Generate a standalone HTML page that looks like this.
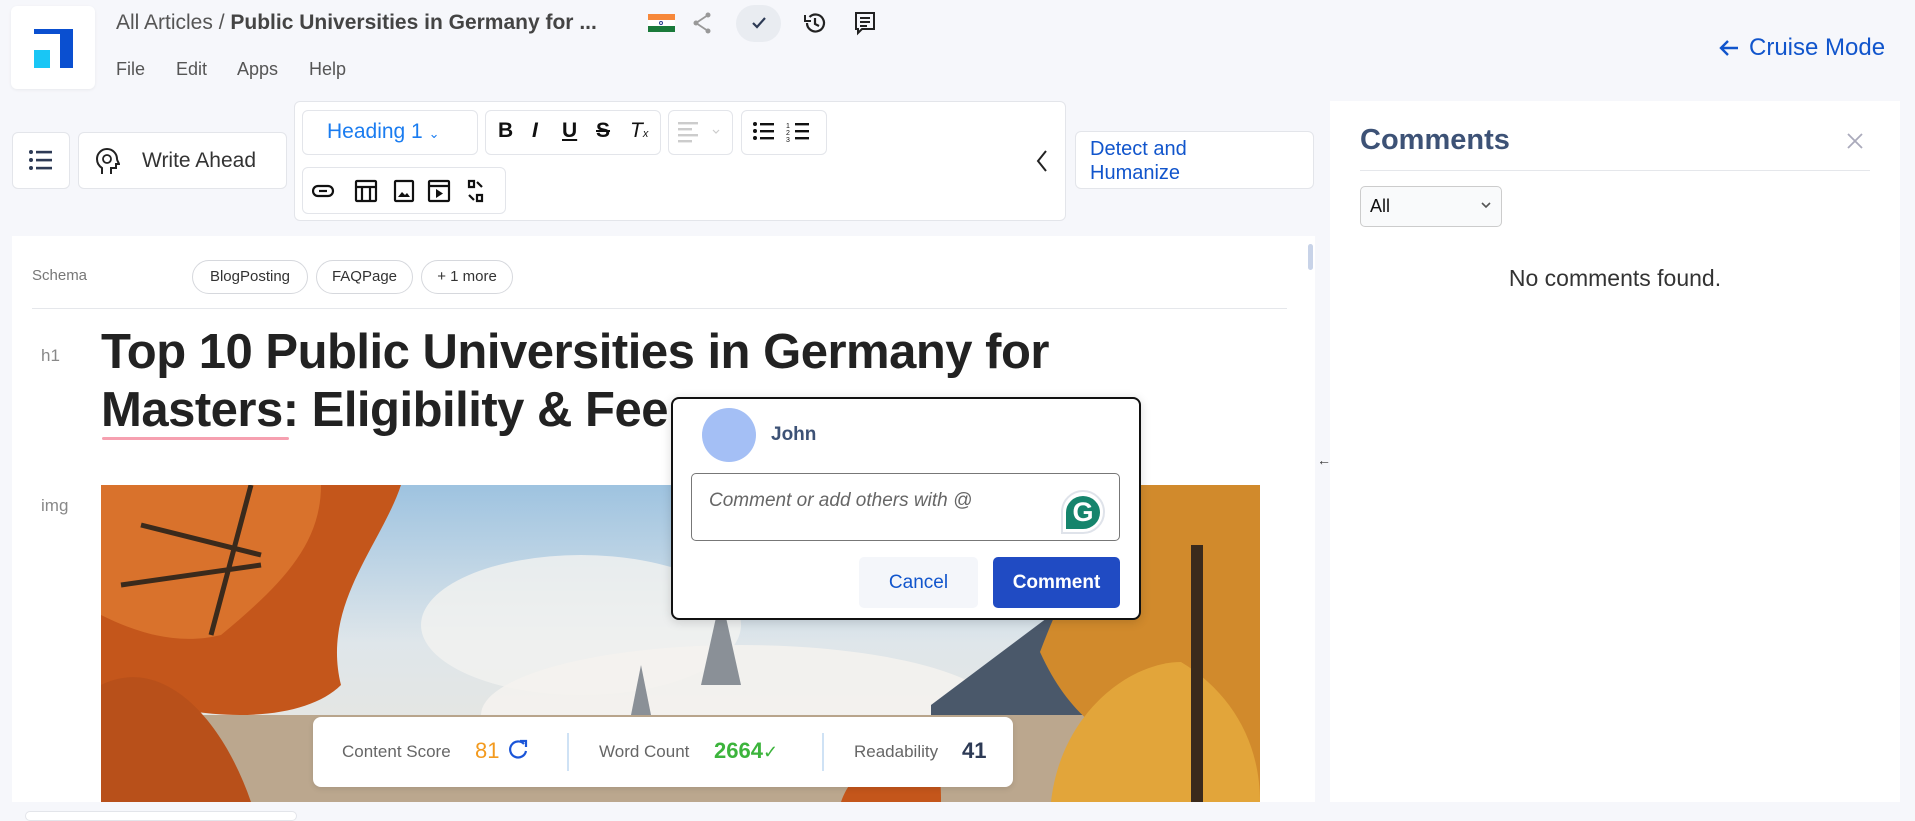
<!DOCTYPE html>
<html><head><meta charset="utf-8"><style>
*{box-sizing:border-box;margin:0;padding:0}
body{width:1915px;height:817px;background:#f6f7fb;font-family:"Liberation Sans",sans-serif;position:relative;overflow:hidden;color:#333}
.a{position:absolute}
.box{position:absolute;background:#fff;border:1px solid #e3e5ea;border-radius:6px}
.pill{position:absolute;top:260px;height:34px;border:1px solid #d6d8dd;border-radius:17px;font-size:15px;line-height:32px;text-align:center;color:#333;background:#fff}
</style></head><body>
<!-- logo -->
<div class="box" style="left:11px;top:6px;width:84px;height:83px;border:none;box-shadow:0 1px 3px rgba(0,0,0,.06)"></div>
<div class="a" style="left:34px;top:29px;width:39px;height:5px;background:#0a4fd0"></div>
<div class="a" style="left:60px;top:29px;width:13px;height:39px;background:#0a4fd0"></div>
<div class="a" style="left:34px;top:50px;width:16px;height:18px;background:#19c6f5"></div>
<div class="a" style="left:116px;top:10px;font-size:21px;line-height:26px;color:#555">All Articles / <b style="font-weight:600;color:#444">Public Universities in Germany for ...</b></div>
<!-- flag -->
<div class="a" style="left:648px;top:14px;width:27px;height:18px"><div style="height:6px;background:#f7883a"></div><div style="height:6px;background:#fff;position:relative"><div style="position:absolute;left:11px;top:1px;width:4px;height:4px;border-radius:50%;border:1px solid #2a3d8f"></div></div><div style="height:6px;background:#1a7a3a"></div></div>
<svg class="a" style="left:690px;top:10px" width="24" height="26" viewBox="0 0 24 26"><circle cx="18" cy="5" r="2.5" fill="#999"/><circle cx="6" cy="13" r="2.5" fill="#999"/><circle cx="18" cy="21" r="2.5" fill="#999"/><path d="M18 5L6 13L18 21" stroke="#999" stroke-width="1.8" fill="none"/></svg>
<div class="a" style="left:736px;top:5px;width:45px;height:37px;border-radius:19px;background:#e9ecf1"></div>
<svg class="a" style="left:749px;top:13px" width="20" height="20"><path d="M4 10l4 4 8-9" stroke="#2d3a55" stroke-width="2.2" fill="none"/></svg>
<svg class="a" style="left:802px;top:10px" width="26" height="26" viewBox="0 0 26 26"><path d="M5 13a8.5 8.5 0 1 0 2.5-6" stroke="#222" stroke-width="2.2" fill="none"/><path d="M3 5v6h6" fill="none" stroke="#222" stroke-width="2"/><path d="M13 8v6l4 2" stroke="#222" stroke-width="2.2" fill="none"/></svg>
<svg class="a" style="left:853px;top:10px" width="24" height="26" viewBox="0 0 24 26"><path d="M3 3h18v16H9l-4 4v-4H3z" stroke="#222" stroke-width="2" fill="none"/><path d="M7 8h10M7 12h10M7 16h7" stroke="#222" stroke-width="2"/></svg>
<div class="a" style="top:59px;left:116px;font-size:18px;color:#555">File</div>
<div class="a" style="top:59px;left:176px;font-size:18px;color:#555">Edit</div>
<div class="a" style="top:59px;left:237px;font-size:18px;color:#555">Apps</div>
<div class="a" style="top:59px;left:309px;font-size:18px;color:#555">Help</div>
<svg class="a" style="left:1718px;top:38px" width="22" height="20"><path d="M20 10H3M10 3L3 10l7 7" stroke="#1155cc" stroke-width="2.4" fill="none"/></svg>
<div class="a" style="left:1749px;top:34px;font-size:24px;color:#1155cc">Cruise Mode</div>
<!-- left buttons -->
<div class="box" style="left:12px;top:132px;width:58px;height:57px"></div>
<svg class="a" style="left:28px;top:148px" width="26" height="24"><g fill="#2d3a55"><circle cx="3" cy="4" r="2"/><circle cx="3" cy="12" r="2"/><circle cx="3" cy="20" r="2"/><rect x="8" y="2.8" width="16" height="2.6"/><rect x="8" y="10.8" width="16" height="2.6"/><rect x="8" y="18.8" width="16" height="2.6"/></g></svg>
<div class="box" style="left:78px;top:132px;width:209px;height:57px"></div>
<svg class="a" style="left:94px;top:147px" width="28" height="30" viewBox="0 0 28 30"><path d="M8 27v-6c-3-2-5-5-5-9a10 10 0 0 1 20 0c0 2 2 4 2 5h-3v4h-5v6" stroke="#222" stroke-width="2" fill="none"/><circle cx="13" cy="12" r="4" stroke="#222" stroke-width="1.8" fill="none"/></svg>
<div class="a" style="left:142px;top:149px;font-size:21px;color:#333">Write Ahead</div>
<!-- toolbar -->
<div class="box" style="left:294px;top:101px;width:772px;height:120px"></div>
<div class="box" style="left:302px;top:110px;width:176px;height:45px"></div>
<div class="a" style="left:327px;top:120px;font-size:21px;color:#1a7cf0">Heading 1 <span style="font-size:13px">⌄</span></div>
<div class="box" style="left:485px;top:110px;width:176px;height:45px"></div>
<div class="a" style="left:498px;top:119px;font-size:21px;color:#111;font-weight:bold">B</div>
<div class="a" style="left:532px;top:119px;font-size:21px;color:#111;font-weight:bold;font-style:italic">I</div>
<div class="a" style="left:562px;top:119px;font-size:21px;color:#111;font-weight:bold;text-decoration:underline">U</div>
<div class="a" style="left:596px;top:119px;font-size:21px;color:#111;font-weight:bold;text-decoration:line-through">S</div>
<div class="a" style="left:630px;top:119px;font-size:21px;color:#111;font-style:italic">T<span style="font-size:11px">x</span></div>
<div class="box" style="left:668px;top:110px;width:65px;height:45px"></div>
<svg class="a" style="left:678px;top:120px" width="50" height="24"><g fill="#ccc"><rect x="0" y="2" width="20" height="2.4"/><rect x="0" y="8" width="14" height="2.4"/><rect x="0" y="14" width="20" height="2.4"/><rect x="0" y="20" width="14" height="2.4"/></g><path d="M35 10l3 3 3-3" stroke="#ccc" fill="none" stroke-width="1.2"/></svg>
<div class="box" style="left:741px;top:110px;width:86px;height:45px"></div>
<svg class="a" style="left:752px;top:120px" width="66" height="24"><g fill="#111"><circle cx="3" cy="4" r="2"/><circle cx="3" cy="11" r="2"/><circle cx="3" cy="18" r="2"/><rect x="8" y="3" width="14" height="2.4"/><rect x="8" y="10" width="14" height="2.4"/><rect x="8" y="17" width="14" height="2.4"/><rect x="43" y="3" width="14" height="2.4"/><rect x="43" y="10" width="14" height="2.4"/><rect x="43" y="17" width="14" height="2.4"/></g><text x="34" y="8" font-size="7" fill="#111">1</text><text x="34" y="15" font-size="7" fill="#111">2</text><text x="34" y="22" font-size="7" fill="#111">3</text></svg>
<div class="box" style="left:302px;top:167px;width:204px;height:47px"></div>
<svg class="a" style="left:312px;top:178px" width="190" height="26" viewBox="0 0 190 26"><g stroke="#111" stroke-width="2.2" fill="none"><rect x="1" y="8" width="20" height="10" rx="5"/><path d="M7 13h8"/><rect x="44" y="3" width="20" height="20" rx="1"/><path d="M44 9h20M50 9v14M58 9v14"/><rect x="83" y="3" width="18" height="20" rx="1"/><rect x="117" y="3" width="20" height="20" rx="1"/><path d="M117 8h20"/><path d="M157 3h5v6h-5zM165 17h5v6h-5zM157 17l5 5M170 9l-5-5"/></g><path d="M86 19l4-5 3 3 2-2 3 4z" fill="#111"/><path d="M124 11v9l7-4.5z" fill="#111"/></svg>
<svg class="a" style="left:1033px;top:148px" width="18" height="26"><path d="M13 3L5 13l8 10" stroke="#222" stroke-width="2" fill="none"/></svg>
<div class="box" style="left:1075px;top:131px;width:239px;height:58px"></div>
<div class="a" style="left:1090px;top:137px;font-size:20px;line-height:24px;color:#1155cc">Detect and<br>Humanize</div>
<!-- editor -->
<div class="a" style="left:12px;top:236px;width:1303px;height:566px;background:#fff"></div>
<div class="a" style="left:1308px;top:244px;width:5px;height:26px;border-radius:3px;background:#c8d3e8"></div>
<div class="a" style="left:32px;top:267px;font-size:15px;color:#777">Schema</div>
<div class="pill" style="left:192px;width:116px">BlogPosting</div>
<div class="pill" style="left:316px;width:97px">FAQPage</div>
<div class="pill" style="left:421px;width:92px">+ 1 more</div>
<div class="a" style="left:32px;top:308px;width:1255px;height:1px;background:#e5e7eb"></div>
<div class="a" style="left:41px;top:346px;font-size:17px;color:#888">h1</div>
<div class="a" style="left:101px;top:323px;font-size:49px;line-height:58px;font-weight:bold;color:#222;letter-spacing:-.5px">Top 10 Public Universities in Germany for<br>Masters: Eligibility &amp; Fee</div>
<div class="a" style="left:102px;top:437px;width:187px;height:3px;background:#f6a0b0;border-radius:2px"></div>
<div class="a" style="left:41px;top:496px;font-size:17px;color:#888">img</div>
<svg class="a" style="left:101px;top:485px" width="1159" height="317" viewBox="0 0 1159 317">
<defs><linearGradient id="sk" x1="0" y1="0" x2="0" y2="1"><stop offset="0" stop-color="#9ec3e0"/><stop offset=".5" stop-color="#dfe6ea"/><stop offset="1" stop-color="#eae6dc"/></linearGradient></defs>
<rect width="1159" height="317" fill="url(#sk)"/>
<ellipse cx="480" cy="140" rx="160" ry="70" fill="#f2f2f0" opacity=".8"/>
<ellipse cx="640" cy="230" rx="260" ry="70" fill="#f4f2ee" opacity=".9"/>
<path d="M600 200l20-90 20 90z" fill="#8a9097"/>
<path d="M530 230l10-50 10 50z" fill="#8a9097"/>
<path d="M830 317V220l120-90 209 0v187z" fill="#4a586a"/>
<rect x="0" y="230" width="1159" height="87" fill="#bba78e"/>
<path d="M0 0h300c-20 60-80 120-60 200-40 40-150 40-240 0z" fill="#c4561b"/>
<path d="M0 0h220c0 60-40 100-100 150-40 10-80 0-120-20z" fill="#d9722c"/>
<path d="M40 40l120 30M20 100l140-20M150 0l-40 150" stroke="#3a2a1c" stroke-width="5" fill="none"/>
<path d="M0 200c60-30 120 30 150 117H0z" fill="#b8501a"/>
<path d="M1030 0h129v317h-40c-60-60-130-40-180-150 30-80 60-120 91-167z" fill="#d18a2c"/>
<path d="M950 317c10-90 80-140 130-140 50 30 79 80 79 140z" fill="#e2a53a"/>
<path d="M1090 317V60l12 0v257z" fill="#3a2a1c"/>
<path d="M740 317c10-30 40-50 70-50s30 30 30 50z" fill="#c4561b"/>
</svg>
<div class="a" style="left:313px;top:717px;width:700px;height:70px;background:#fff;border-radius:8px;box-shadow:0 2px 6px rgba(0,0,0,.1)"></div>
<div class="a" style="left:342px;top:742px;font-size:17px;color:#666">Content Score</div>
<div class="a" style="left:475px;top:738px;font-size:22px;color:#f39a1e">81</div>
<svg class="a" style="left:507px;top:738px" width="22" height="24"><path d="M17 6a8 8 0 1 0 2 7" stroke="#1a55d8" stroke-width="2.2" fill="none"/><path d="M13 3h6v6" stroke="#1a55d8" stroke-width="2.2" fill="none"/></svg>
<div class="a" style="left:567px;top:733px;width:2px;height:38px;background:#cfe2f5"></div>
<div class="a" style="left:599px;top:742px;font-size:17px;color:#666">Word Count</div>
<div class="a" style="left:714px;top:738px;font-size:22px;font-weight:bold;color:#3cb43c">2664<span style="font-weight:normal;font-size:18px">✓</span></div>
<div class="a" style="left:822px;top:733px;width:2px;height:38px;background:#cfe2f5"></div>
<div class="a" style="left:854px;top:742px;font-size:17px;color:#666">Readability</div>
<div class="a" style="left:962px;top:738px;font-size:22px;font-weight:bold;color:#2d3a55">41</div>
<div class="a" style="left:25px;top:811px;width:272px;height:10px;background:#fff;border:1px solid #e3e5ea;border-radius:5px"></div>
<div class="a" style="left:1317px;top:452px;font-size:14px;color:#333">←|</div>
<!-- popup -->
<div class="a" style="left:671px;top:397px;width:470px;height:223px;background:#fff;border:2px solid #111;border-radius:8px;box-shadow:0 2px 10px rgba(0,0,0,.15)"></div>
<div class="a" style="left:702px;top:408px;width:54px;height:54px;border-radius:50%;background:#a4bff5"></div>
<div class="a" style="left:771px;top:424px;font-size:19px;font-weight:bold;color:#3d5276">John</div>
<div class="a" style="left:691px;top:473px;width:429px;height:68px;border:1px solid #777;border-radius:5px"></div>
<div class="a" style="left:709px;top:490px;font-size:19px;font-style:italic;color:#666">Comment or add others with @</div>
<div class="a" style="left:1061px;top:490px;width:44px;height:44px;border-radius:50% 50% 50% 0;border:2px solid #dfe3ea;background:#fff"></div>
<div class="a" style="left:1066px;top:496px;width:34px;height:33px;border-radius:50% 50% 50% 0;background:#15846c;color:#fff;font-size:27px;font-weight:bold;text-align:center;line-height:33px">G</div>
<div class="a" style="left:859px;top:557px;width:119px;height:51px;border-radius:5px;background:#f4f6fa;color:#1155cc;font-size:19px;text-align:center;line-height:51px">Cancel</div>
<div class="a" style="left:993px;top:557px;width:127px;height:51px;border-radius:5px;background:#204bc3;color:#fff;font-size:19px;font-weight:bold;text-align:center;line-height:51px">Comment</div>
<!-- comments panel -->
<div class="a" style="left:1330px;top:101px;width:570px;height:701px;background:#fff"></div>
<div class="a" style="left:1360px;top:124px;font-size:29px;font-weight:bold;color:#3d5276">Comments</div>
<svg class="a" style="left:1845px;top:131px" width="20" height="20"><path d="M3 3l14 14M17 3L3 17" stroke="#aab" stroke-width="1.8"/></svg>
<div class="a" style="left:1360px;top:170px;width:510px;height:1px;background:#e5e7eb"></div>
<div class="a" style="left:1360px;top:186px;width:142px;height:41px;border:1px solid #ccc;border-radius:5px;background:#f9fafb"></div>
<div class="a" style="left:1370px;top:196px;font-size:18px;color:#111">All</div>
<svg class="a" style="left:1480px;top:200px" width="12" height="10"><path d="M2 3l4 4 4-4" stroke="#555" stroke-width="1.6" fill="none"/></svg>
<div class="a" style="left:1330px;top:265px;width:570px;text-align:center;font-size:23px;color:#333">No comments found.</div>
</body></html>
